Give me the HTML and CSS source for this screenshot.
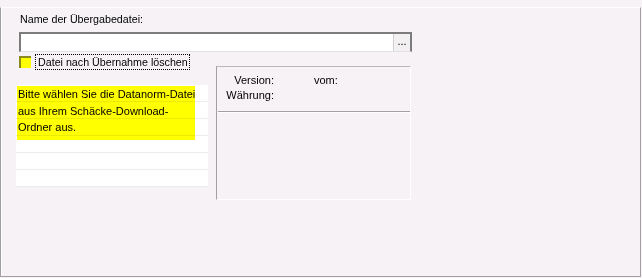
FILE: index.html
```html
<!DOCTYPE html>
<html lang="de">
<head>
<meta charset="utf-8">
<link rel="stylesheet" href="styles.css">
</head>
<body>
<div class="frame">
  <div class="label">Name der Übergabedatei:</div>
  <div class="filebox">
    <div class="field"></div>
    <div class="browse">...</div>
  </div>
  <div class="lower">
    <div class="leftcol">
      <div class="check">
        <span class="box"></span>
        <span class="focus">Datei nach Übernahme löschen</span>
      </div>
      <div class="grid">
        <div class="row"></div>
        <div class="row"></div>
        <div class="row"></div>
        <div class="row"></div>
        <div class="row"></div>
        <div class="row"></div>
        <div class="hint">Bitte wählen Sie die Datanorm-Datei<br>aus Ihrem Schäcke-Download-<br>Ordner aus.</div>
      </div>
    </div>
    <div class="panel">
      <div class="prow"><span class="pkey">Version:</span><span class="pval">vom:</span></div>
      <div class="prow"><span class="pkey">Währung:</span></div>
      <div class="sep"></div>
    </div>
  </div>
</div>
</body>
</html>
```

FILE: styles.css
```css
html, body {
  margin: 0;
  padding: 0;
  background: #f6f2f5;
  font-family: "Liberation Sans", Arial, sans-serif;
  font-size: 11px;
  color: #000;
}

.frame {
  box-sizing: border-box;
  margin-top: 7px;
  width: 641px;
  height: 270px;
  border-left: 1px solid #a0a0a0;
  border-top: 1px solid #ffffff;
  border-right: 1px solid #a0a0a0;
  border-bottom: 1px solid #a0a0a0;
  box-shadow: inset 1px 0 0 #ffffff;
}

.label {
  margin: 5px 0 0 19px;
  font-size: 10.7px;
  line-height: 13px;
  height: 13px;
}

.filebox {
  box-sizing: border-box;
  display: flex;
  margin: 6px 0 0 18px;
  width: 393px;
  height: 20px;
  background: #ffffff;
  border-top: 2px solid #7c7c7c;
  border-left: 2px solid #7c7c7c;
  border-right: 2px solid #7c7c7c;
  border-bottom: 1px solid #e2e2e2;
}

.field {
  flex: 1;
}

.browse {
  box-sizing: border-box;
  width: 17px;
  height: 17px;
  background: #f2f0f1;
  border-left: 1px solid #d0d0d0;
  text-align: center;
  line-height: 14px;
  font-size: 11px;
  color: #000;
}

.lower {
  display: flex;
  align-items: flex-start;
}

.leftcol {
  margin-left: 15px;
  width: 192px;
}

.check {
  display: flex;
  align-items: center;
  margin-top: 2px;
  height: 16px;
}

.box {
  box-sizing: border-box;
  width: 12px;
  height: 12px;
  margin-left: 3px;
  background: #ffff00;
  border-top: 2px solid #8a8a20;
  border-left: 2px solid #8a8a20;
}

.focus {
  box-sizing: border-box;
  margin-left: 4px;
  height: 16px;
  padding: 0 1px 0 2px;
  font-size: 10.7px;
  line-height: 14px;
  border: 1px dotted #000;
  white-space: nowrap;
}

.grid {
  position: relative;
  margin-top: 15px;
  width: 192px;
  background: #ffffff;
}

.row {
  height: 16px;
  border-bottom: 1px solid #ececec;
}

.row:last-of-type {
  border-bottom: none;
  height: 16px;
}

.hint {
  position: absolute;
  left: 1px;
  top: 1px;
  width: 178px;
  height: 54px;
  padding-left: 1px;
  box-sizing: border-box;
  background: #ffff00;
  mix-blend-mode: multiply;
  line-height: 16.7px;
  padding-top: 0;
  white-space: nowrap;
}

.panel {
  box-sizing: border-box;
  margin: 14px 0 0 8px;
  width: 195px;
  height: 134px;
  border-top: 1px solid #b8b8b8;
  border-left: 1px solid #a0a0a0;
  border-right: 1px solid #ffffff;
  border-bottom: 1px solid #ffffff;
  padding-top: 6px;
}

.prow {
  display: flex;
  line-height: 15px;
  height: 15px;
}

.pkey {
  width: 57px;
  text-align: right;
}

.pval {
  margin-left: 40px;
}

.sep {
  margin: 8px 0 0 1px;
  height: 1px;
  background: #a0a0a0;
  box-shadow: 0 1px 0 #ffffff;
}
```
